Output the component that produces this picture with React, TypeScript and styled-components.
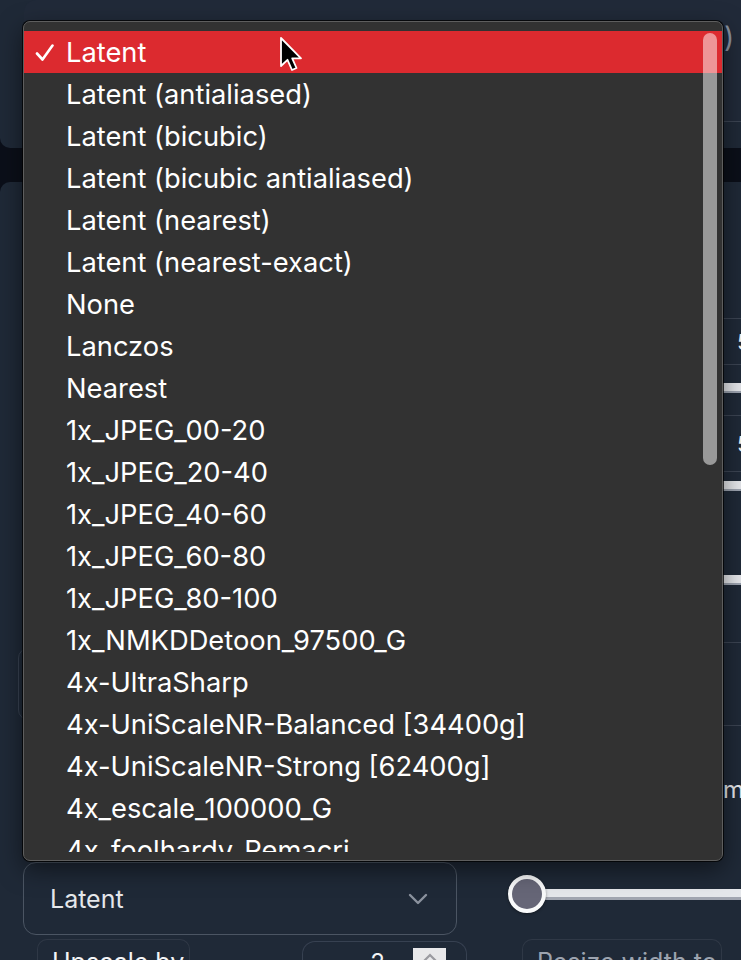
import React from "react";
import styled, { createGlobalStyle } from "styled-components";

const GlobalStyle = createGlobalStyle`
  html, body { margin: 0; padding: 0; background: #0b0f19; }
  body { font-family: Inter, "Noto Sans", "Liberation Sans", sans-serif; }
  * { box-sizing: border-box; }
`;

const Page = styled.div`
  position: relative;
  width: 741px;
  height: 960px;
  overflow: hidden;
  display: flex;
  flex-direction: column;
  background: #0b0f19;
`;

const TopPanel = styled.div`
  height: 148px;
  flex: none;
  width: 800px;
  background: #1f2937;
  border-bottom-left-radius: 10px;
  padding-left: 24px;
`;

const PromptBox = styled.div`
  height: 122px;
  width: 760px;
  background: #212a39;
  border-radius: 12px;
  border-bottom: 1px solid #3b4452;
  padding-left: 700px;
  padding-top: 20px;
  color: #8b93a1;
  font-size: 28px;
  line-height: 34px;
`;

const Gap = styled.div`
  height: 34px;
  flex: none;
`;

const MainPanel = styled.div`
  flex: 1;
  width: 800px;
  background: #1f2937;
  border-top-left-radius: 10px;
  display: flex;
  flex-direction: column;
`;

const UpperSection = styled.div`
  height: 680px;
  flex: none;
  display: flex;
`;

const LeftHidden = styled.div`
  width: 723px;
  flex: none;
  padding-left: 18px;
  padding-top: 466px;
`;

const HiddenBox = styled.div`
  width: 300px;
  height: 72px;
  border: 1px solid #374151;
  border-radius: 10px;
`;

const RightStrip = styled.div`
  flex: 1;
  display: flex;
  flex-direction: column;
`;

const NumberBox = styled.div<{ $top: number; $h: number }>`
  margin-top: ${(p) => p.$top}px;
  height: ${(p) => p.$h}px;
  border-top: 1px solid #3b4452;
  border-bottom: 1px solid #3b4452;
  display: flex;
  align-items: center;
  padding-left: 14px;
  color: #f3f4f6;
  font-size: 22px;
`;

const Track = styled.div<{ $top: number }>`
  margin-top: ${(p) => p.$top}px;
  height: 10px;
  background: #e5e7eb;
  border-bottom: 2px solid #9ca3af;
`;

const StripText = styled.div<{ $top: number }>`
  margin-top: ${(p) => p.$top}px;
  color: #e5e7eb;
  font-size: 24px;
  line-height: 28px;
`;

const BottomRow = styled.div`
  display: flex;
  align-items: center;
  height: 73px;
  flex: none;
  padding-left: 23px;
`;

const SelectBox = styled.div`
  width: 434px;
  height: 73px;
  border: 1.5px solid #4b5563;
  border-radius: 13px;
  background: #1f2937;
  display: flex;
  align-items: center;
  justify-content: space-between;
  padding: 0 28px 0 26px;
  color: #e5e7eb;
  font-size: 25px;
`;

const SliderWrap = styled.div`
  margin-left: 51px;
  flex: 1;
  display: flex;
  align-items: center;
  margin-top: -9px;
`;

const Thumb = styled.div`
  width: 38px;
  height: 38px;
  flex: none;
  border-radius: 50%;
  background: #666677;
  border: 4px solid #f9fafb;
  box-shadow: 0 1px 3px rgba(0, 0, 0, 0.4);
  position: relative;
  z-index: 1;
`;

const SliderTrack = styled.div`
  flex: 1;
  height: 11px;
  margin-left: -2px;
  background: #e5e7eb;
  border-bottom: 3px solid #a1a5b0;
`;

const LastRow = styled.div`
  display: flex;
  margin-top: 4px;
  height: 40px;
  flex: none;
`;

const LabelBox = styled.div<{ $left: number; $w: number; $dim?: boolean }>`
  margin-left: ${(p) => p.$left}px;
  width: ${(p) => p.$w}px;
  height: 40px;
  border: 1px solid #2f3846;
  border-bottom: none;
  border-radius: 10px 10px 0 0;
  padding: 8px 0 0 14px;
  color: ${(p) => (p.$dim ? "#9ca3af" : "#f3f4f6")};
  font-size: 25px;
  line-height: 28px;
  white-space: nowrap;
  overflow: hidden;
`;

const NumberInput = styled.div`
  margin-left: 112px;
  margin-top: 2px;
  width: 165px;
  height: 40px;
  border: 1.5px solid #374151;
  border-bottom: none;
  border-radius: 13px 13px 0 0;
  display: flex;
  padding: 6px 20px 0 0;
  justify-content: flex-end;
  gap: 28px;
  color: #f3f4f6;
  font-size: 24px;
`;

const SpinButton = styled.div`
  width: 33px;
  height: 32px;
  background: #e8e8ea;
  display: flex;
  justify-content: center;
  padding-top: 4px;
`;

const Menu = styled.div`
  position: absolute;
  left: 23px;
  top: 21px;
  width: 700px;
  height: 840px;
  background: #323232;
  border: 1px solid #5e5e5e;
  border-radius: 7px;
  box-shadow: 0 0 0 1px rgba(0, 0, 0, 0.75), 0 8px 24px rgba(0, 0, 0, 0.5);
  padding: 9px 0 8px;
  z-index: 10;
`;

const MenuList = styled.div`
  height: 100%;
  overflow: hidden;
`;

const MenuItem = styled.div<{ $selected?: boolean }>`
  position: relative;
  height: 42px;
  display: flex;
  align-items: center;
  padding-left: 42px;
  color: #ffffff;
  font-size: 27.3px;
  white-space: nowrap;
  background: ${(p) => (p.$selected ? "#dc2a2f" : "transparent")};
`;

const Check = styled.svg`
  position: absolute;
  left: 11px;
  top: 13px;
`;

const ScrollThumb = styled.div`
  position: absolute;
  left: 679px;
  top: 11px;
  width: 14px;
  height: 432px;
  border-radius: 7px;
  background: rgba(255, 255, 255, 0.5);
`;

const Cursor = styled.svg`
  position: absolute;
  left: 279px;
  top: 36px;
  z-index: 20;
`;

const items = [
  "Latent",
  "Latent (antialiased)",
  "Latent (bicubic)",
  "Latent (bicubic antialiased)",
  "Latent (nearest)",
  "Latent (nearest-exact)",
  "None",
  "Lanczos",
  "Nearest",
  "1x_JPEG_00-20",
  "1x_JPEG_20-40",
  "1x_JPEG_40-60",
  "1x_JPEG_60-80",
  "1x_JPEG_80-100",
  "1x_NMKDDetoon_97500_G",
  "4x-UltraSharp",
  "4x-UniScaleNR-Balanced [34400g]",
  "4x-UniScaleNR-Strong [62400g]",
  "4x_escale_100000_G",
  "4x_foolhardy_Remacri",
  "4x_NMKD-Siax_200k",
];

export default function App() {
  return (
    <>
      <GlobalStyle />
      <Page>
        <TopPanel>
          <PromptBox>)</PromptBox>
        </TopPanel>
        <Gap />
        <MainPanel>
          <UpperSection>
            <LeftHidden>
              <HiddenBox />
            </LeftHidden>
            <RightStrip>
              <NumberBox $top={136} $h={47}>5</NumberBox>
              <Track $top={18} />
              <NumberBox $top={22} $h={57}>5</NumberBox>
              <Track $top={9} />
              <Track $top={84} />
              <NumberBox $top={57} $h={84} />
              <StripText $top={50}>m</StripText>
            </RightStrip>
          </UpperSection>
          <BottomRow>
            <SelectBox>
              <span>Latent</span>
              <svg width="20" height="12" viewBox="0 0 20 12">
                <polyline
                  points="2,2 10,10 18,2"
                  fill="none"
                  stroke="#8b929e"
                  strokeWidth="2.4"
                  strokeLinecap="round"
                  strokeLinejoin="round"
                />
              </svg>
            </SelectBox>
            <SliderWrap>
              <Thumb />
              <SliderTrack />
            </SliderWrap>
          </BottomRow>
          <LastRow>
            <LabelBox $left={37} $w={153}>Upscale by</LabelBox>
            <NumberInput>
              <span>2</span>
              <SpinButton>
                <svg width="18" height="12" viewBox="0 0 18 12">
                  <polyline
                    points="2,10 9,3 16,10"
                    fill="none"
                    stroke="#9a9aa0"
                    strokeWidth="2.2"
                  />
                </svg>
              </SpinButton>
            </NumberInput>
            <LabelBox $left={55} $w={200} $dim>
              Resize width to
            </LabelBox>
          </LastRow>
        </MainPanel>

        <Menu>
          <MenuList>
            {items.map((label, i) => (
              <MenuItem key={label} $selected={i === 0}>
                {i === 0 && (
                  <Check width="20" height="18" viewBox="0 0 20 18">
                    <polyline
                      points="2,9.5 7.5,15.5 17.5,1.5"
                      fill="none"
                      stroke="#ffffff"
                      strokeWidth="2.6"
                      strokeLinecap="round"
                      strokeLinejoin="round"
                    />
                  </Check>
                )}
                {label}
              </MenuItem>
            ))}
          </MenuList>
          <ScrollThumb />
        </Menu>

        <Cursor width="26" height="40" viewBox="0 0 26 40">
          <path
            d="M2 2 L2 30 L8.5 23.8 L13 34 L17.5 32 L13.2 22.3 L22 22.3 Z"
            fill="#000"
            stroke="#fff"
            strokeWidth="1.8"
            strokeLinejoin="round"
          />
        </Cursor>
      </Page>
    </>
  );
}
